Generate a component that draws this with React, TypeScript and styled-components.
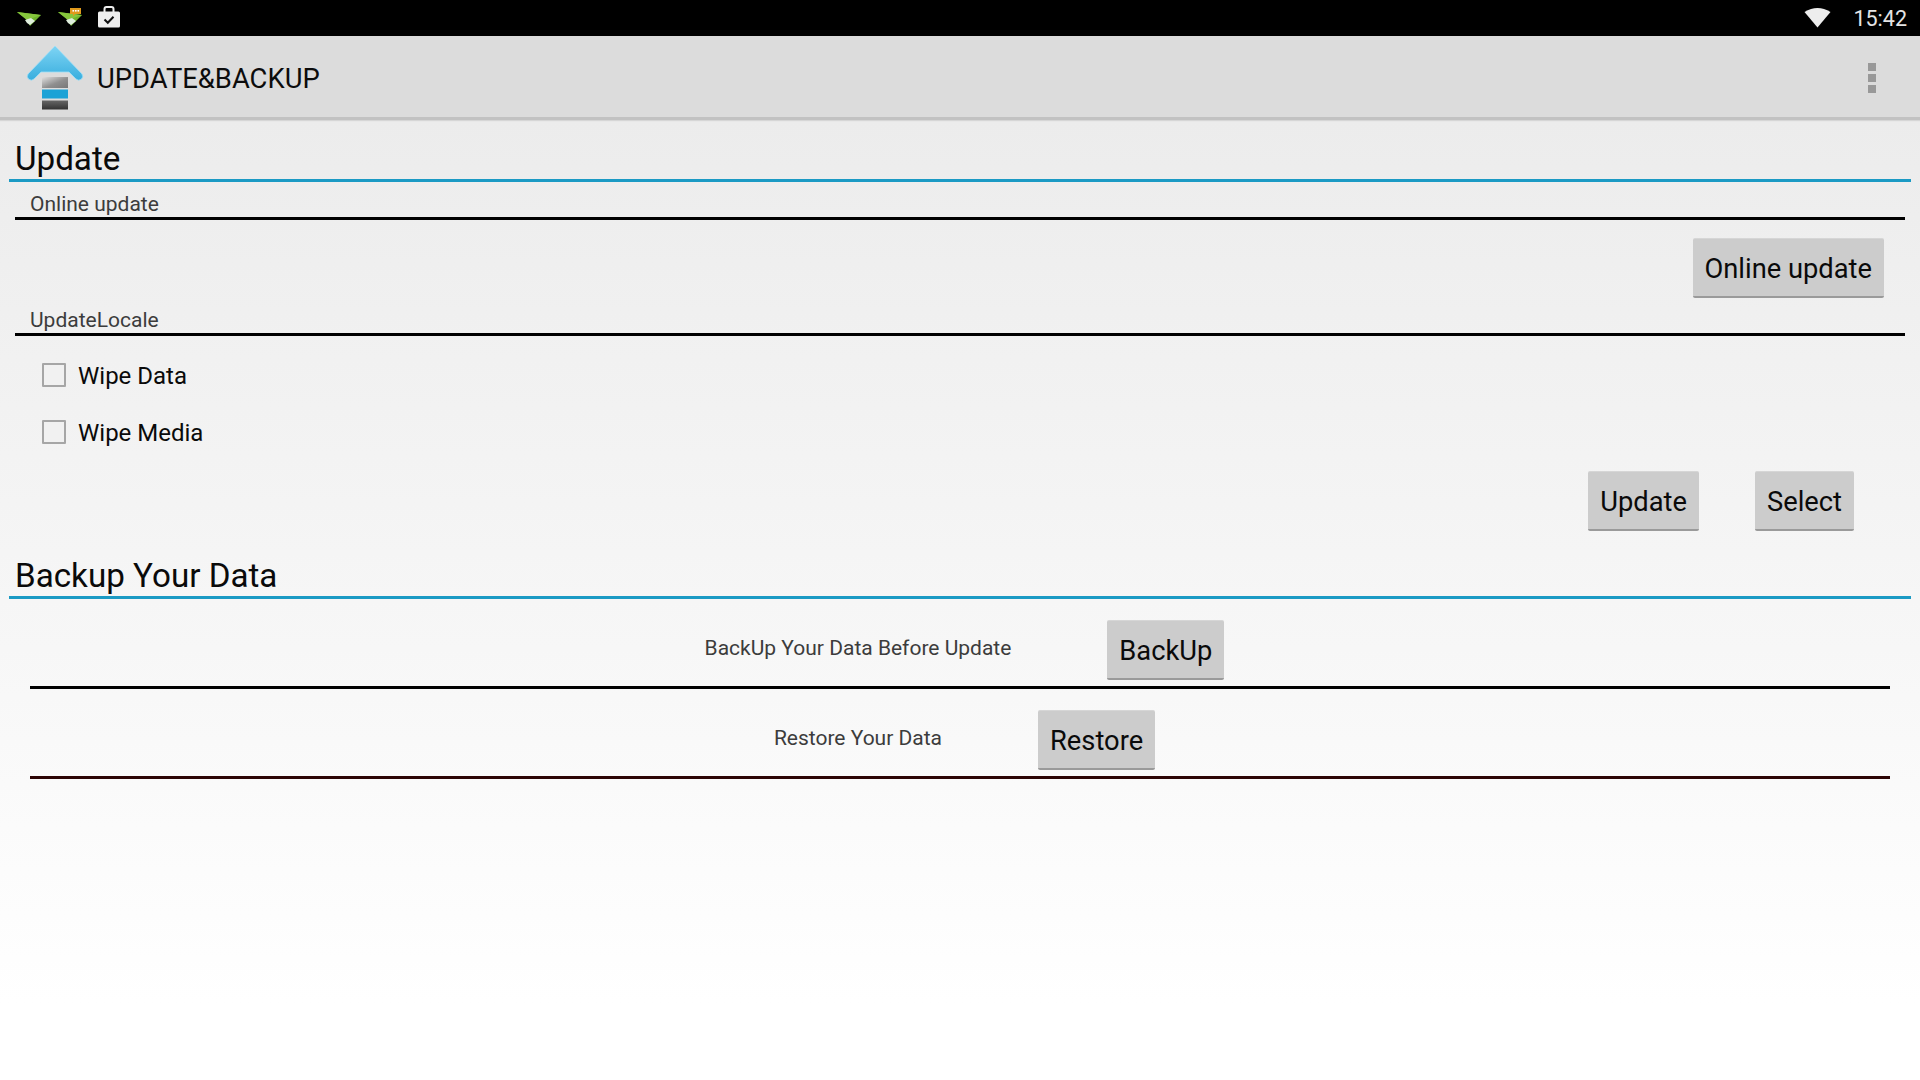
import React from "react";
import styled, { createGlobalStyle } from "styled-components";

const Global = createGlobalStyle`
  html, body { margin: 0; padding: 0; background: #fff; overflow: hidden; }
  #root { width: 1920px; height: 1080px; }
  * { box-sizing: border-box; }
`;

const Screen = styled.div`
  width: 1920px;
  height: 1080px;
  display: flex;
  flex-direction: column;
  font-family: Roboto, "Liberation Sans", sans-serif;
  color: #000;
`;

const StatusBar = styled.div`
  height: 36px;
  flex: none;
  background: #000;
  display: flex;
  align-items: center;
  padding: 0 13px 0 16px;
`;

const StatusIcons = styled.div`
  display: flex;
  align-items: center;
  gap: 15px;
`;

const StatusRight = styled.div`
  margin-left: auto;
  display: flex;
  align-items: center;
  gap: 22px;
`;

const Clock = styled.span`
  font-size: 21.5px;
  color: #e4e4e4;
  line-height: 36px;
  padding-top: 1px;
`;

const PlaneSvg = styled.svg`
  margin-top: 0;
`;

const BagSvg = styled.svg`
  margin-bottom: 3px;
`;

const WifiSvg = styled.svg`
  margin-bottom: 1px;
`;

const ActionBar = styled.div`
  position: relative;
  height: 84px;
  flex: none;
  background: #dcdcdc;
  border-bottom: 3px solid #c2c2c2;
  box-shadow: 0 1px 1px #d6d6d6;
  display: flex;
  align-items: center;
  padding: 4px 44px 0 26px;
`;

const Title = styled.div`
  font-size: 27.4px;
  margin-left: 11px;
  color: #0c0c0c;
`;

const Overflow = styled.div`
  margin-left: auto;
  margin-top: -1px;
  display: flex;
  flex-direction: column;
  gap: 3px;
`;

const Dot = styled.span`
  width: 8px;
  height: 8px;
  background: #999;
`;

const Content = styled.div`
  flex: 1;
  display: flex;
  flex-direction: column;
  background: linear-gradient(180deg, #ececec 0%, #f8f8f8 60%, #ffffff 92%);
`;

const SectionHeader = styled.div<{ $height: number }>`
  height: ${(p) => p.$height}px;
  flex: none;
  margin: 0 9px;
  padding: 0 0 0 6px;
  border-bottom: 3px solid #1b9ac4;
  display: flex;
  align-items: flex-end;
  font-size: 33.2px;
  line-height: 40px;
  color: #0a0a0a;
`;

const SubHeader = styled.div`
  height: 38px;
  flex: none;
  margin: 0 15px;
  padding-left: 15px;
  border-bottom: 3px solid #000;
  display: flex;
  align-items: flex-end;
  font-size: 21px;
  line-height: 26px;
  color: #3c3c3c;
`;

const ActionRow = styled.div<{ $gap: number; $right: number; $top: number }>`
  flex: none;
  display: flex;
  justify-content: flex-end;
  gap: ${(p) => p.$gap}px;
  padding: ${(p) => p.$top}px ${(p) => p.$right}px 0 0;
`;

const Btn = styled.button`
  height: 60px;
  padding: 2px 12px 0;
  border: none;
  border-top: 1px solid #d6d6d6;
  border-bottom: 2px solid #9a9a9a;
  border-radius: 2px;
  background: #cccccc;
  font-family: inherit;
  font-size: 27.3px;
  color: #0a0a0a;
`;

const CheckList = styled.div`
  flex: none;
  padding: 10px 0 0 42px;
  height: 135px;
  display: flex;
  flex-direction: column;
`;

const CheckRow = styled.label`
  height: 57px;
  flex: none;
  display: flex;
  align-items: center;
  gap: 12px;
  font-size: 24px;
  color: #0a0a0a;
`;

const CheckText = styled.span`
  padding-top: 2px;
`;

const Box = styled.span`
  width: 24px;
  height: 24px;
  border: 2px solid #a6a6a6;
  border-radius: 1px;
  background: #f1f1f1;
`;

const BackupRow = styled.div<{ $rule: string }>`
  height: 90px;
  flex: none;
  margin: 0 30px;
  padding: 21px 0 0 9px;
  border-bottom: 3px solid ${(p) => p.$rule};
  display: flex;
  justify-content: center;
  gap: 96px;
`;

const RowLabel = styled.span`
  font-size: 21px;
  line-height: 28px;
  padding-top: 14px;
  color: #3c3c3c;
`;

const Plane = ({ bubble }: { bubble?: boolean }) => (
  <PlaneSvg width="26" height="22" viewBox="0 0 26 22">
    <path d="M1 5 L25 8 L14 19 L11 13 Z" fill="#6fb52c" />
    <path d="M1 5 L25 8 L11 13 Z" fill="#86c63c" />
    <path d="M9 13 L15 11 L19 14 L14 18 L11 16 Z" fill="#dfeedd" />
    {bubble && (
      <>
        <path d="M13 1 H24 V7 H18 L16 9.5 V7 H13 Z" fill="#e09a1c" />
        <rect x="15.5" y="3" width="1.6" height="1.6" fill="#fff" />
        <rect x="18" y="3" width="1.6" height="1.6" fill="#fff" />
        <rect x="20.5" y="3" width="1.6" height="1.6" fill="#fff" />
      </>
    )}
  </PlaneSvg>
);

const Bag = () => (
  <BagSvg width="22" height="22" viewBox="0 0 22 22">
    <path
      d="M6.5 6 V3 Q6.5 1 8.5 1 H13.5 Q15.5 1 15.5 3 V6 M6.5 6"
      fill="none"
      stroke="#eee"
      strokeWidth="2"
    />
    <rect x="0" y="5.5" width="22" height="16" rx="1.5" fill="#eee" />
    <path d="M6.5 13.5 L9.8 16.8 L15.5 10.8" fill="none" stroke="#111" strokeWidth="2" />
  </BagSvg>
);

const Wifi = () => (
  <WifiSvg width="27" height="21" viewBox="0 0 27 21">
    <path d="M0.5 5 Q13.5 -3 26.5 5 L13.5 20.5 Z" fill="#ededed" />
  </WifiSvg>
);

const Logo = () => (
  <svg width="60" height="66" viewBox="0 0 60 66">
    <defs>
      <linearGradient id="arrowFill" x1="0" y1="0" x2="0" y2="1">
        <stop offset="0" stopColor="#7ed4f4" />
        <stop offset="1" stopColor="#39aede" />
      </linearGradient>
      <linearGradient id="greyBar" x1="0" y1="0" x2="1" y2="1">
        <stop offset="0" stopColor="#e0e0e0" />
        <stop offset="0.55" stopColor="#8f8f8f" />
        <stop offset="1" stopColor="#777" />
      </linearGradient>
      <linearGradient id="darkBar" x1="0" y1="0" x2="0" y2="1">
        <stop offset="0" stopColor="#666" />
        <stop offset="1" stopColor="#333" />
      </linearGradient>
    </defs>
    <path
      d="M29 0 L56 28 Q58 31 55 33.5 Q52 35 50 33 L43 26 H15 L8 33 Q6 35 3 33.5 Q0 31 2 28 Z"
      fill="url(#arrowFill)"
      stroke="#9fe0f7"
      strokeWidth="0.8"
    />
    <rect x="16" y="31" width="26" height="11" fill="url(#greyBar)" />
    <rect x="16" y="43.5" width="26" height="9" fill="#1ba2d6" />
    <rect x="16" y="54.5" width="26" height="9" fill="url(#darkBar)" />
  </svg>
);

export default function App() {
  return (
    <Screen>
      <Global />
      <StatusBar>
        <StatusIcons>
          <Plane />
          <Plane bubble />
          <Bag />
        </StatusIcons>
        <StatusRight>
          <Wifi />
          <Clock>15:42</Clock>
        </StatusRight>
      </StatusBar>
      <ActionBar>
        <Logo />
        <Title>UPDATE&amp;BACKUP</Title>
        <Overflow>
          <Dot />
          <Dot />
          <Dot />
        </Overflow>
      </ActionBar>
      <Content>
        <SectionHeader $height={62}>Update</SectionHeader>
        <SubHeader>Online update</SubHeader>
        <ActionRow $gap={0} $right={36} $top={18}>
          <Btn>Online update</Btn>
        </ActionRow>
        <SubHeader>UpdateLocale</SubHeader>
        <CheckList>
          <CheckRow>
            <Box />
            <CheckText>Wipe Data</CheckText>
          </CheckRow>
          <CheckRow>
            <Box />
            <CheckText>Wipe Media</CheckText>
          </CheckRow>
        </CheckList>
        <ActionRow $gap={56} $right={66} $top={0}>
          <Btn>Update</Btn>
          <Btn>Select</Btn>
        </ActionRow>
        <SectionHeader $height={68}>Backup Your Data</SectionHeader>
        <BackupRow $rule="#000">
          <RowLabel>BackUp Your Data Before Update</RowLabel>
          <Btn>BackUp</Btn>
        </BackupRow>
        <BackupRow $rule="#2c0404">
          <RowLabel>Restore Your Data</RowLabel>
          <Btn>Restore</Btn>
        </BackupRow>
      </Content>
    </Screen>
  );
}
